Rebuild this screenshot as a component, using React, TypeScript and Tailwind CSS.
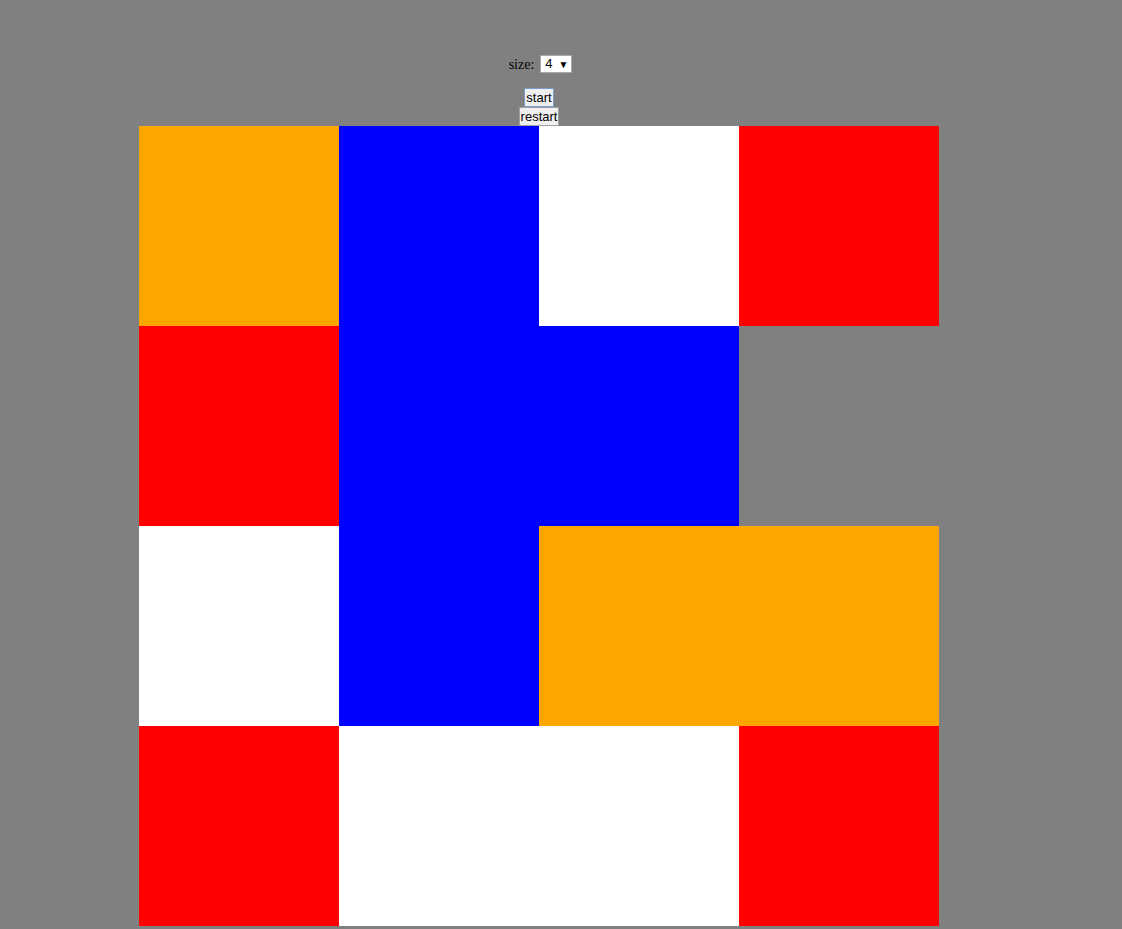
const COLORS: Record<string, string> = {
  o: "bg-[#ffa500]",
  b: "bg-[#0000ff]",
  w: "bg-white",
  r: "bg-[#ff0000]",
  e: "bg-transparent",
};

const BOARD = [
  ["o", "b", "w", "r"],
  ["r", "b", "b", "e"],
  ["w", "b", "o", "o"],
  ["r", "w", "w", "r"],
];

export default function App() {
  return (
    <div className="min-h-[929px] w-full bg-[#808080]">
      <div className="ml-[139px] flex w-[800px] flex-col items-center pt-[55px]">
        <div className="ml-[3px] flex h-[18px] items-center gap-[6px] font-['Liberation_Serif',serif] text-[14px] text-black">
          <span>size:</span>
          <div className="flex h-[18px] w-[32px] items-center justify-between border border-[#a9a9a9] bg-white pl-[4px] pr-[3px] font-['Liberation_Sans',sans-serif] text-[13px]">
            <span>4</span>
            <span className="text-[10px]">▼</span>
          </div>
        </div>
        <button className="mt-[15px] h-[19px] border border-[#7a9cd3] bg-[#efefef] px-[1px] font-['Liberation_Sans',sans-serif] text-[13px] leading-none text-black">
          start
        </button>
        <button className="h-[19px] border border-[#a0a0a0] bg-[#efefef] px-[1px] font-['Liberation_Sans',sans-serif] text-[13px] leading-none text-black">
          restart
        </button>
        <div className="grid grid-cols-4">
          {BOARD.flat().map((c, i) => (
            <div key={i} className={`h-[200px] w-[200px] ${COLORS[c]}`} />
          ))}
        </div>
      </div>
    </div>
  );
}
